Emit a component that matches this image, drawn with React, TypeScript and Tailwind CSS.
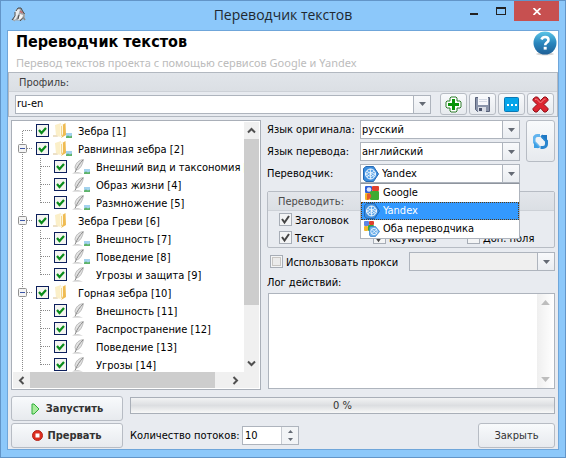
import { useId, useState, type ReactNode } from "react";

type IconProps = { className?: string };

function PenguinIcon() {
  return (
    <svg width="16" height="16" viewBox="0 0 16 16" aria-hidden="true">
      <path d="M4 14.5 1 13l3-4 .5-5L7 1h3l1.500 2.500 2.500 3v3l-3 4H4z" fill="#a3a7aa" />
      <path d="M4 5 6 2l3 .5L8 6l-3 6-2 1z" fill="#e9ecee" />
      <path d="M9 7l3 1-1 4-4 1z" fill="#f5f5f5" />
      <path d="M5 4 7 1l3 0 1.500 3 2 3M4 5v4l-3 4M7 12l1-4M9 14l2.500-3" stroke="#4a4a4a" fill="none" />
      <path d="M9 4l2.500 2" stroke="#c8686a" strokeWidth="1.500" />
      <path d="M12 10l2 3" stroke="#8a8a8a" strokeWidth="1.500" />
    </svg>
  );
}

function HelpIcon() {
  return (
    <svg width="24" height="25" viewBox="0 0 24 25" aria-hidden="true">
      <defs>
        <linearGradient id="helpFill" x1="0" y1="0" x2="0" y2="1">
          <stop offset="0" stopColor="#5cc6e8" />
          <stop offset="0.5" stopColor="#2a86bd" />
          <stop offset="1" stopColor="#1f5f96" />
        </linearGradient>
      </defs>
      <ellipse cx="12" cy="23" rx="9" ry="1.500" fill="#d5d5d5" />
      <circle cx="12" cy="12" r="11.500" fill="url(#helpFill)" />
      <path d="M8.500 8.500c.6-1.800 2-2.500 3.600-2.500 2 0 3.400 1.100 3.400 2.900 0 2.700-3.300 2.600-3.300 5.300" stroke="#fff" strokeWidth="2.600" fill="none" />
      <rect x="10.700" y="15.800" width="3" height="2.800" fill="#fff" />
    </svg>
  );
}

function PlusIcon() {
  return (
    <svg width="17" height="17" viewBox="0 0 17 17" aria-hidden="true">
      <path d="M6 1h5l1 1v3h3l1 1v5l-1 1h-3v3l-1 1H6l-1-1v-3H2l-1-1V6l1-1h3V2z" fill="#fff" stroke="#2f7d2c" />
      <path d="M7 3h3v4h4v3h-4v4H7v-4H3V7h4z" fill="#089408" />
    </svg>
  );
}

function SaveIcon() {
  return (
    <svg width="17" height="17" viewBox="0 0 17 17" aria-hidden="true">
      <path d="M1.500 1.500h14v14h-12l-2-2z" fill="#8a94aa" stroke="#59627a" />
      <rect x="4" y="1" width="10" height="8" fill="#f7f8fb" />
      <path d="M5 3.500h8M5 5.500h8" stroke="#d3d9e4" />
      <rect x="4" y="11" width="8" height="5" fill="#d9dde5" />
      <rect x="5" y="12" width="3" height="3" fill="#49516a" />
    </svg>
  );
}

function DotsIcon() {
  return (
    <svg width="15" height="15" viewBox="0 0 15 15" aria-hidden="true">
      <rect x="0.500" y="0.500" width="14" height="14" rx="1" fill="#05a5ea" stroke="#0b78b4" />
      <path d="M3 7h2v2H3zM7 7h2v2H7zM11 7h2v2h-2z" fill="#fff" />
    </svg>
  );
}

function DeleteIcon() {
  return (
    <svg width="17" height="17" viewBox="0 0 17 17" aria-hidden="true">
      <path
        d="M3.500 1h2l3 3.500L12 1h2l2 2v1.500L12 8.500l4 4V14l-2 2h-2l-3.500-4L5 16H3l-2-2v-1.500l4-4-4-4V3z"
        fill="#dc2430"
        stroke="#8f1018"
        strokeLinejoin="round"
      />
      <path d="M3 3.500 4.500 3l4 4 4-4h1" stroke="#f08a8a" fill="none" />
    </svg>
  );
}

function RefreshIcon() {
  return (
    <svg width="15" height="15" viewBox="0 0 15 15" aria-hidden="true">
      <path d="M7 1.500H4.500A3.500 3.500 0 0 0 1 5v3l3 3 2 2.500" fill="none" stroke="#62b4ee" strokeWidth="3" />
      <path d="M8 13.500h2.500A3.500 3.500 0 0 0 14 10V7l-3-3-2-2.500" fill="none" stroke="#2a86cf" strokeWidth="3" transform="translate(-0.500 0)" />
      <path d="M8 1h6v6z" fill="#1f78c4" />
      <path d="M7 14H1V8z" fill="#3d9fe4" />
      <path d="M6 4l4 1.500L9 11 5 9.500z" fill="#eef3f8" />
    </svg>
  );
}

function ImageBadge() {
  return (
    <g>
      <rect x="13" y="11" width="6" height="5" fill="#a3d2ee" />
      <path d="M13 14.500l2-1 2 1 2-1V16h-6z" fill="#5fb46a" />
    </g>
  );
}

function FolderIcon({ badge }: { badge: boolean }) {
  return (
    <svg width="20" height="18" viewBox="0 0 20 18" className="shrink-0" aria-hidden="true">
      <path d="M2 3 8 1v14l-5-1z" fill="#fbefc8" />
      <path d="M0 13h4l1 2H0z" fill="#ece0c8" />
      <path d="M7 3l3-1.500V13l-3 2z" fill="#fdf7e2" />
      <path d="M10 2.500 12.500 1 13 13l-5 3 2-4z" fill="#efbb52" />
      <path d="M8.500 4v10" stroke="#f6d68a" />
      {badge && <ImageBadge />}
    </svg>
  );
}

function QuillIcon({ badge }: { badge: boolean }) {
  return (
    <svg width="20" height="18" viewBox="0 0 20 18" className="shrink-0" aria-hidden="true">
      <path d="M12.500 1.500C8 2 4.500 5 4 9.500L5 12c4-.5 6.500-5 7.500-10.500z" fill="#e2e2e2" stroke="#a6a6a6" strokeWidth="0.700" />
      <path d="M12 2C9 5 6 9 4 14.500" stroke="#8a8a8a" strokeWidth="1" fill="none" />
      <path d="M1 15.500c3-1.600 6-1.400 11 0z" fill="#c4c4c4" />
      {badge && <ImageBadge />}
    </svg>
  );
}

function YandexIcon({ className }: IconProps) {
  return (
    <svg width="16" height="16" viewBox="0 0 16 16" className={className} aria-hidden="true">
      <path d="M3 0.500h7.500L15.500 8l-5 7.500H3l-2.500-2v-11z" fill="#3d8ede" stroke="#2569b4" />
      <circle cx="7.500" cy="8" r="5" fill="#5aa5ea" stroke="#fff" />
      <path d="M4 5l7 5.500M11 5l-7 6M7.500 3v10M3 8l4-2 5 2-4 3z" stroke="#fff" strokeWidth="0.700" fill="none" />
    </svg>
  );
}

function GoogleIcon({ className }: IconProps) {
  return (
    <svg width="16" height="16" viewBox="0 0 16 16" className={className} aria-hidden="true">
      <rect x="1" y="1" width="7" height="7" rx="1" fill="#2f5fd8" />
      <rect x="8" y="1" width="7" height="5" rx="1" fill="#e0402e" />
      <rect x="1" y="8" width="5" height="7" rx="1" fill="#f2b52a" />
      <rect x="6" y="6" width="9" height="9" rx="1" fill="#3cab32" />
      <circle cx="5" cy="4.500" r="2.300" fill="#dbe5fb" />
      <path d="M3 9c2-1 3-1 4 1s-1 4-4 5z" fill="#e4572e" />
    </svg>
  );
}

function BothIcon({ className }: IconProps) {
  return (
    <svg width="16" height="16" viewBox="0 0 16 16" className={className} aria-hidden="true">
      <rect x="0" y="0" width="5" height="5" rx="1" fill="#5c86e6" />
      <rect x="5" y="0" width="5" height="4" rx="1" fill="#e0402e" />
      <rect x="0" y="5" width="4" height="5" rx="1" fill="#f2b52a" />
      <rect x="4" y="4" width="6" height="6" rx="1" fill="#3cab32" />
      <path d="M6.500 5.500h5l4 5-4 5h-5l-1-1.500V7z" fill="#6aaeea" stroke="#2f7dcc" strokeWidth="0.700" />
      <circle cx="10" cy="10.500" r="3.200" fill="none" stroke="#fff" strokeWidth="0.800" />
      <path d="M8 8.500l4.500 4M12.500 8.500l-4.500 4" stroke="#fff" strokeWidth="0.700" />
    </svg>
  );
}

function Chevron({ dir }: { dir: "up" | "down" | "left" | "right" }) {
  const d = {
    up: "M1 6.500 4.500 3 8 6.500",
    down: "M1 2.500 4.500 6 8 2.500",
    left: "M6.500 1 3 4.500 6.500 8",
    right: "M2.500 1 6 4.500 2.500 8",
  }[dir];
  return (
    <svg width="9" height="9" viewBox="0 0 9 9" aria-hidden="true">
      <path d={d} stroke="#505050" strokeWidth="2" fill="none" />
    </svg>
  );
}

function Triangle({ up, className }: { up?: boolean; className?: string }) {
  return (
    <svg width="7" height="4" viewBox="0 0 7 4" className={className} aria-hidden="true">
      <path d={up ? "M0 4 3.500 0 7 4z" : "M0 0h7L3.500 4z"} fill="currentColor" />
    </svg>
  );
}

function TreeLines({ level, first, last, expander }: { level: number; first: boolean; last: boolean; expander: boolean }) {
  const width = level === 0 ? 23 : 41;
  return (
    <svg width={width} height="18" viewBox={`0 0 ${width} 18`} className="shrink-0" aria-hidden="true">
      <g stroke="#8a8a8a" strokeDasharray="1 1" fill="none">
        <path d={first ? "M9.500 9v9" : "M9.500 0v18"} />
        {level === 0 ? <path d="M10 8.500h9" /> : <path d={last ? "M27.500 0v9" : "M27.500 0v18"} />}
        {level === 1 && <path d="M28 8.500h9" />}
      </g>
      {expander && (
        <g>
          <rect x="5.500" y="4.500" width="8" height="8" rx="1" fill="#f4f4f4" stroke="#919191" />
          <path d="M7 8.500h5" stroke="#3b55a5" />
        </g>
      )}
    </svg>
  );
}

type Node = { text: string; level: number; badge: boolean; last?: boolean };

const nodes: Node[] = [
  { text: "Зебра [1]", level: 0, badge: true },
  { text: "Равнинная зебра [2]", level: 0, badge: true },
  { text: "Внешний вид и таксономия [3]", level: 1, badge: true },
  { text: "Образ жизни [4]", level: 1, badge: true },
  { text: "Размножение [5]", level: 1, badge: true, last: true },
  { text: "Зебра Греви [6]", level: 0, badge: false },
  { text: "Внешность [7]", level: 1, badge: true },
  { text: "Поведение [8]", level: 1, badge: true },
  { text: "Угрозы и защита [9]", level: 1, badge: false, last: true },
  { text: "Горная зебра [10]", level: 0, badge: false },
  { text: "Внешность [11]", level: 1, badge: false },
  { text: "Распространение [12]", level: 1, badge: false },
  { text: "Поведение [13]", level: 1, badge: false },
  { text: "Угрозы [14]", level: 1, badge: false, last: true },
];

function TreeRow({ node, index }: { node: Node; index: number }) {
  return (
    <li className="flex h-[18px]">
      <TreeLines level={node.level} first={index === 0} last={!!node.last} expander={node.level === 0 && index > 0} />
      <label className="flex whitespace-nowrap">
        <span className="relative mt-[2px] mr-1 flex size-[13px] shrink-0">
          <input type="checkbox" defaultChecked className="peer size-[13px] appearance-none border border-[#0c1f5c] bg-[#f4f4f0]" />
          <svg viewBox="0 0 13 13" className="pointer-events-none absolute inset-0 hidden size-[13px] peer-checked:block" aria-hidden="true">
            <path d="M3 6l2.500 3L10 4" stroke="#0a8c1a" strokeWidth="2.200" fill="none" />
          </svg>
        </span>
        {node.level === 0 ? <FolderIcon badge={node.badge} /> : <QuillIcon badge={node.badge} />}
        <span className="ml-[5px] pt-[3px]">{node.text}</span>
      </label>
    </li>
  );
}

function Tree() {
  return (
    <div className="flex h-[270px] flex-col border border-[#a9afb8] bg-white p-px">
      <div className="flex min-h-0 flex-1">
        <ul className="min-w-0 flex-1 overflow-hidden">
          {nodes.map((n, i) => (
            <TreeRow key={n.text} node={n} index={i} />
          ))}
        </ul>
        <div className="flex w-[15px] shrink-0 flex-col bg-[#f0f0f0]">
          <button aria-label="Прокрутить вверх" className="flex h-[17px] items-center justify-center">
            <Chevron dir="up" />
          </button>
          <div className="h-[166px] bg-[#cdcdcd]" />
          <div className="flex-1" />
          <button aria-label="Прокрутить вниз" className="flex h-[17px] items-center justify-center">
            <Chevron dir="down" />
          </button>
        </div>
      </div>
      <div className="flex h-4 shrink-0 bg-[#f0f0f0] pr-[15px]">
        <button aria-label="Прокрутить влево" className="flex w-[17px] items-center justify-center">
          <Chevron dir="left" />
        </button>
        <div className="w-[185px] bg-[#cdcdcd]" />
        <div className="flex-1" />
        <button aria-label="Прокрутить вправо" className="flex w-[17px] items-center justify-center">
          <Chevron dir="right" />
        </button>
      </div>
    </div>
  );
}

function Combo({
  id,
  options,
  label,
  icon,
  disabled,
  className = "",
}: {
  id?: string;
  options: string[];
  label?: string;
  icon?: ReactNode;
  disabled?: boolean;
  className?: string;
}) {
  return (
    <div className={`relative h-[19px] border border-[#aeb4bd] ${disabled ? "bg-[#efefef]" : "bg-white"} ${className}`}>
      <select
        id={id}
        aria-label={label}
        disabled={disabled}
        className={`block h-full w-full appearance-none bg-transparent pr-5 ${icon ? "pl-[21px]" : "pl-px"}`}
      >
        {options.map((o) => (
          <option key={o}>{o}</option>
        ))}
      </select>
      {icon}
      <span className="pointer-events-none absolute inset-y-0 right-0 flex w-[17px] items-center justify-center border-l border-[#aeb4bd] bg-linear-to-b from-[#f8f9fb] to-[#eaedf1] text-[#646a74]">
        <Triangle />
      </span>
    </div>
  );
}

function Button({ label, className = "", children }: { label?: string; className?: string; children: ReactNode }) {
  return (
    <button
      aria-label={label}
      className={`flex items-center justify-center rounded-[3px] border border-[#b7bcc4] bg-linear-to-b from-[#f8fafc] to-[#e7eaee] ${className}`}
    >
      {children}
    </button>
  );
}

function Check({ label, checked, boxed }: { label: string; checked?: boolean; boxed?: boolean }) {
  return (
    <label className="flex h-[18px] gap-[3px] whitespace-nowrap">
      <span className="relative mt-[2px] flex size-[13px] shrink-0">
        <input type="checkbox" defaultChecked={checked} className="peer size-[13px] appearance-none border border-[#a7adb6] bg-[#f3f4f5]" />
        {boxed && <span className="pointer-events-none absolute inset-[2px] border border-[#c8c6c3] bg-[#ebebeb]" />}
        <svg viewBox="0 0 13 13" className="pointer-events-none absolute inset-0 hidden size-[13px] peer-checked:block" aria-hidden="true">
          <path d="M3 6l2.500 3.500L10 3" stroke="#454545" strokeWidth="2" fill="none" />
        </svg>
      </span>
      <span className="pt-[3px]">{label}</span>
    </label>
  );
}

const services = [
  { name: "Google", Icon: GoogleIcon },
  { name: "Yandex", Icon: YandexIcon },
  { name: "Оба переводчика", Icon: BothIcon },
];

function ServicePicker({ id }: { id: string }) {
  const [active] = useState("Yandex");
  return (
    <div className="relative">
      <Combo
        id={id}
        options={["Yandex", "Google", "Оба переводчика"]}
        icon={<YandexIcon className="pointer-events-none absolute top-px left-[2px]" />}
      />
      <ul role="listbox" aria-label="Переводчик" className="absolute inset-x-0 top-full z-10 border border-[#aeb4bd] border-t-[#8f959e] bg-white">
        {services.map(({ name, Icon }) => (
          <li
            key={name}
            role="option"
            aria-selected={name === active}
            className="flex h-[18px] items-center gap-[3px] border border-transparent pl-[2px] aria-selected:border-dotted aria-selected:border-[#5b3a10] aria-selected:bg-[#3399ff] aria-selected:text-white"
          >
            <Icon />
            {name}
          </li>
        ))}
      </ul>
    </div>
  );
}

export default function App() {
  const id = useId();
  return (
    <div className="flex flex-col border border-[#6295c8] bg-[#8cc8fa] px-[6px] pb-[7px] font-['DejaVu_Sans_Condensed','DejaVu_Sans',sans-serif] text-[11px] leading-[14px] text-black">
      <header className="flex h-[29px] items-start">
        <div className="flex w-[112px] pt-[6px] pl-1">
          <PenguinIcon />
        </div>
        <h1 className="flex-1 pt-1 text-center font-['Open_Sans',sans-serif] text-[14px] leading-5 text-[#1f2830]">Переводчик текстов</h1>
        <div className="flex w-[112px] justify-end">
          <button aria-label="Свернуть" className="flex h-5 w-[27px] items-end justify-center pb-[6px]">
            <span className="h-[2px] w-2 bg-[#222]" />
          </button>
          <button aria-label="Развернуть" className="flex h-5 w-[27px] items-center justify-center">
            <span className="h-2 w-[10px] border border-t-2 border-[#222]" />
          </button>
          <button aria-label="Закрыть окно" className="flex h-5 w-[45px] items-center justify-center bg-[#c75050]">
            <svg width="8" height="7" viewBox="0 0 8 7" aria-hidden="true">
              <path d="M0.500 0 7.500 7M7.500 0 0.500 7" stroke="#fff" strokeWidth="1.700" />
            </svg>
          </button>
        </div>
      </header>

      <main className="flex flex-col border border-[#6fa6da] bg-[#e8ebf0]">
        <div className="flex h-[41px] justify-between bg-white pr-px pl-2">
          <div>
            <h2 className="pt-px text-[16px] leading-5 font-bold">Переводчик текстов</h2>
            <p className="pt-1 font-['Noto_Sans',sans-serif] text-[#bcbcbc]">Перевод текстов проекта с помощью сервисов Google и Yandex</p>
          </div>
          <button aria-label="Справка" className="self-start">
            <HelpIcon />
          </button>
        </div>

        <section className="border border-[#b2b8c0]">
          <h3 className="h-[19px] border-b border-[#cdd1d7] bg-linear-to-b from-[#e1e5ea] to-[#dbdfe4] pt-[3px] pl-[10px] text-[#3c3c3c]">Профиль:</h3>
          <div className="flex items-center pt-px pr-[3px] pb-px pl-[6px]">
            <Combo label="Профиль" options={["ru-en"]} className="mr-[9px] flex-1" />
            <div className="flex gap-[2px]">
              <Button label="Добавить" className="h-[22px] w-[27px]"><PlusIcon /></Button>
              <Button label="Сохранить" className="h-[22px] w-[27px]"><SaveIcon /></Button>
              <Button label="Переименовать" className="h-[22px] w-[27px]"><DotsIcon /></Button>
              <Button label="Удалить" className="h-[22px] w-[27px]"><DeleteIcon /></Button>
            </div>
          </div>
        </section>

        <div className="grid grid-cols-[250px_1fr] gap-[6px] pt-[3px] pr-[3px] pl-[3px]">
          <Tree />
          <div className="flex flex-col">
            <div className="flex gap-[6px]">
              <div className="grid flex-1 grid-cols-[93px_1fr] items-center gap-y-[3px]">
                <label htmlFor={`${id}-src`}>Язык оригинала:</label>
                <Combo id={`${id}-src`} options={["русский"]} />
                <label htmlFor={`${id}-dst`}>Язык перевода:</label>
                <Combo id={`${id}-dst`} options={["английский"]} />
                <label htmlFor={`${id}-svc`}>Переводчик:</label>
                <ServicePicker id={`${id}-svc`} />
              </div>
              <Button label="Обновить" className="h-[42px] w-[29px]"><RefreshIcon /></Button>
            </div>

            <fieldset className="mt-2 rounded-[2px] border border-[#b7bcc4]" aria-labelledby={`${id}-grp`}>
              <div id={`${id}-grp`} className="h-[19px] border-b border-[#cdd1d7] bg-linear-to-b from-[#e3e6eb] to-[#dbdfe4] pt-[3px] pl-[10px] text-[#4a4a4a]">Переводить:</div>
              <div className="grid grid-cols-[94px_94px_1fr] pl-[11px]">
                <div className="col-span-3"><Check label="Заголовок" checked /></div>
                <Check label="Текст" checked />
                <Check label="Keywords" checked />
                <Check label="Доп. поля" />
              </div>
            </fieldset>

            <div className="mt-[4px] flex items-center justify-between pl-[3px]">
              <Check label="Использовать прокси" boxed />
              <Combo label="Прокси" options={[]} disabled className="w-[146px]" />
            </div>

            <label htmlFor={`${id}-log`} className="mt-[5px]">Лог действий:</label>
            <div className="mt-[3px] ml-px flex h-[96px] border border-[#aeb4bd] bg-white">
              <textarea id={`${id}-log`} className="block min-w-0 flex-1 resize-none" />
              <div className="flex w-[17px] flex-col items-center justify-between bg-linear-to-r from-[#efefef] to-white py-[6px] text-[#bdbdbd]">
                <Triangle up className="h-[5px] w-[9px]" />
                <Triangle className="h-[5px] w-[9px]" />
              </div>
            </div>
          </div>
        </div>

        <footer className="grid grid-cols-[112px_1fr] gap-x-[7px] gap-y-[2px] px-[3px] pt-[6px] pb-px">
          <Button className="h-[25px] gap-[6px] font-bold text-[#333]">
            <svg width="9" height="12" viewBox="0 0 9 12" aria-hidden="true">
              <path d="M1 1h2l5 5-5 5H1z" fill="#a8eb9c" stroke="#2fae3a" />
            </svg>
            Запустить
          </Button>
          <div role="progressbar" aria-valuenow={0} aria-label="Ход перевода" className="mt-px flex h-[17px] items-center justify-center border border-[#a9afb8] bg-linear-to-b from-[#f2f3f4] via-[#dcdee1] to-[#f8f8f8] text-[#333]">
            0 %
          </div>
          <Button className="h-[25px] gap-1 font-bold text-[#333]">
            <svg width="11" height="11" viewBox="0 0 11 11" aria-hidden="true">
              <circle cx="5.500" cy="5.500" r="5" fill="#dd2e1f" stroke="#b3241a" />
              <rect x="3.500" y="3.500" width="4" height="4" fill="#fff" />
            </svg>
            Прервать
          </Button>
          <div className="flex items-center">
            <label htmlFor={`${id}-thr`} className="w-[112px] whitespace-nowrap">Количество потоков:</label>
            <div className="flex h-[19px] w-[57px] border border-[#aeb4bd] bg-white">
              <input id={`${id}-thr`} type="text" defaultValue="10" className="min-w-0 flex-1 pl-[2px]" />
              <div className="flex w-[17px] flex-col border-l border-[#c6cad0] bg-[#f2f4f6] text-[#646a74]">
                <button aria-label="Больше" className="flex flex-1 items-center justify-center"><Triangle up className="h-[3px] w-[5px]" /></button>
                <button aria-label="Меньше" className="flex flex-1 items-center justify-center"><Triangle className="h-[3px] w-[5px]" /></button>
              </div>
            </div>
            <Button className="ml-auto h-[25px] w-[77px] text-[#333]">Закрыть</Button>
          </div>
        </footer>
      </main>
    </div>
  );
}
